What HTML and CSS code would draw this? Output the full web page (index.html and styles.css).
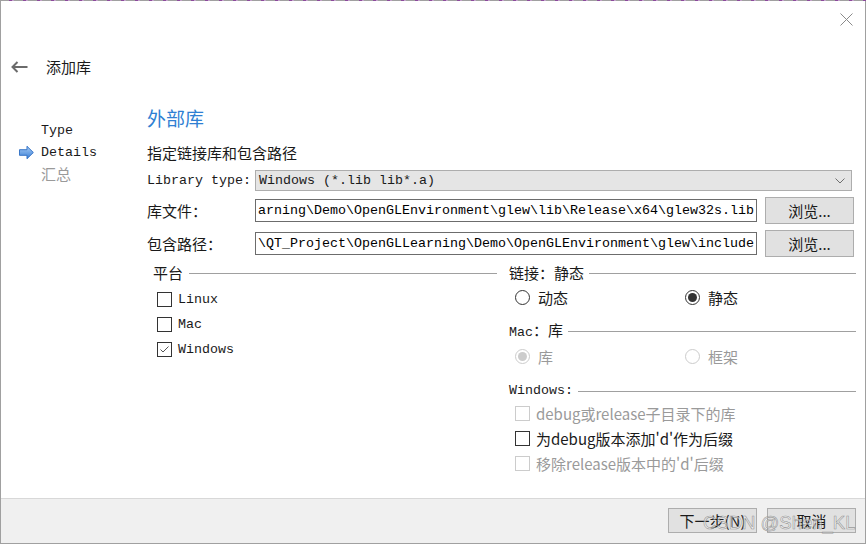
FILE: index.html
```html
<!DOCTYPE html>
<html lang="zh-CN">
<head>
<meta charset="utf-8">
<title>添加库</title>
<link rel="stylesheet" href="styles.css">
</head>
<body>
<div class="window">
  <div class="topline"></div>
  <div class="titlebar">
    <svg class="close" width="13" height="13" viewBox="0 0 13 13"><path d="M0.5 0.5 L12.5 12.5 M12.5 0.5 L0.5 12.5" stroke="#8a8a8a" stroke-width="1" fill="none"/></svg>
  </div>
  <div class="header">
    <svg class="back" width="17" height="12" viewBox="0 0 17 12"><path d="M1.5 6 H16.5 M6.5 1 L1.5 6 L6.5 11" stroke="#6b6b6b" stroke-width="2" fill="none"/></svg>
    <span class="header-title">添加库</span>
  </div>
  <div class="body">
    <nav class="nav">
      <div class="nav-item"><span class="nav-mark"></span><span class="mono">Type</span></div>
      <div class="nav-item"><svg class="nav-mark" width="16" height="15" viewBox="0 0 16 15"><defs><linearGradient id="ag" x1="0" y1="0" x2="0" y2="1"><stop offset="0" stop-color="#a9cdf5"/><stop offset="1" stop-color="#3a7fd6"/></linearGradient></defs><path d="M0.5 4.5 H8.5 V0.8 L15.3 7.5 L8.5 14.2 V10.5 H0.5 Z" fill="url(#ag)" stroke="#2f6fc4" stroke-width="1"/></svg><span class="mono">Details</span></div>
      <div class="nav-item pending"><span class="nav-mark"></span><span>汇总</span></div>
    </nav>
    <main class="main">
      <h1 class="title">外部库</h1>
      <p class="subtitle">指定链接库和包含路径</p>
      <div class="form">
        <span class="form-label mono">Library type:</span>
        <div class="combo"><span class="mono">Windows (*.lib lib*.a)</span><svg class="chev" width="10" height="6" viewBox="0 0 10 6"><path d="M0.5 0.5 L5 5 L9.5 0.5" stroke="#6f6f6f" fill="none" stroke-width="1"/></svg></div>
        <span class="form-label">库文件：</span>
        <div class="field mono">arning\Demo\OpenGLEnvironment\glew\lib\Release\x64\glew32s.lib</div>
        <button class="btn browse">浏览...</button>
        <span class="form-label">包含路径：</span>
        <div class="field mono">\QT_Project\OpenGLLearning\Demo\OpenGLEnvironment\glew\include</div>
        <button class="btn browse">浏览...</button>
      </div>
      <div class="groups">
        <section class="group group-left">
          <div class="group-head"><span>平台</span><span class="rule"></span></div>
          <div class="check-row first"><span class="box"></span><span class="mono">Linux</span></div>
          <div class="check-row"><span class="box"></span><span class="mono">Mac</span></div>
          <div class="check-row"><span class="box"><svg width="13" height="13" viewBox="0 0 13 13"><path d="M2.5 6.5 L5 9 L10.5 3.5" stroke="#555" stroke-width="1" fill="none"/></svg></span><span class="mono">Windows</span></div>
        </section>
        <section class="group group-right">
          <div class="group-head"><span>链接：静态</span><span class="rule"></span></div>
          <div class="radio-row first">
            <div class="radio-item"><span class="radio"></span><span>动态</span></div>
            <div class="radio-item"><span class="radio on"></span><span>静态</span></div>
          </div>
          <div class="group-head sub mac-head"><span><span class="mono">Mac</span>：库</span><span class="rule"></span></div>
          <div class="radio-row second disabled">
            <div class="radio-item"><span class="radio on"></span><span>库</span></div>
            <div class="radio-item"><span class="radio"></span><span>框架</span></div>
          </div>
          <div class="group-head sub win-head"><span class="mono">Windows:</span><span class="rule"></span></div>
          <div class="check-row first disabled"><span class="box"></span><span>debug或release子目录下的库</span></div>
          <div class="check-row"><span class="box"></span><span>为debug版本添加'd'作为后缀</span></div>
          <div class="check-row disabled"><span class="box"></span><span>移除release版本中的'd'后缀</span></div>
        </section>
      </div>
    </main>
  </div>
  <footer class="footer">
    <button class="btn foot">下一步(N)</button>
    <button class="btn foot">取消</button>
  </footer>
  <div class="watermark">CSDN @Shen_KL</div>
</div>
</body>
</html>
```
FILE: styles.css
```css
html, body {
  margin: 0;
  padding: 0;
  background: #fff;
}
body {
  font-family: "Noto Sans CJK SC", "Noto Sans", sans-serif;
  font-size: 15px;
  color: #1a1a1a;
}
.mono {
  font-family: "Liberation Mono", "Noto Sans CJK SC", monospace;
  font-size: 13.33px;
}
.window {
  position: relative;
  width: 866px;
  height: 544px;
  box-sizing: border-box;
  border: 1px solid #a0a0a0;
  border-top: 0;
  display: flex;
  flex-direction: column;
  background: #fff;
}
.topline {
  height: 1px;
  margin: 0 -1px;
  background: repeating-linear-gradient(90deg, #a0a0a0 0 9px, #8c4a9c 9px 12px, #c0a0c8 12px 14px);
}
.titlebar {
  height: 40px;
  display: flex;
  justify-content: flex-end;
  align-items: flex-start;
  padding: 12px 12px 0 0;
  box-sizing: border-box;
}
.header {
  height: 52px;
  display: flex;
  align-items: center;
  padding-left: 10px;
  gap: 18px;
}
.back { display: block; }
.header-title { line-height: 20px; }
.body {
  flex: 1;
  display: flex;
}
.nav {
  width: 146px;
  padding: 27px 0 0 18px;
  box-sizing: border-box;
}
.nav-item {
  height: 21.5px;
  display: flex;
  align-items: center;
  gap: 7px;
}
.nav-mark {
  width: 15px;
  height: 15px;
  display: block;
  flex: none;
}
.nav-item.pending { color: #9a9a9a; }
.main {
  width: 709px;
  padding-top: 13px;
}
.title {
  margin: 0;
  font-weight: normal;
  font-size: 19px;
  line-height: 24px;
  color: #2f7fd3;
}
.subtitle {
  margin: 13px 0 0;
  line-height: 20px;
}
.form {
  margin-top: 7px;
  display: grid;
  grid-template-columns: 108px 502px 97px;
  grid-template-rows: 21px 27px 27px;
  row-gap: 6px;
  align-items: center;
}
.form-label {
  line-height: 17px;
}
.combo {
  grid-column: 2 / 4;
  margin-right: 2px;
  height: 21px;
  box-sizing: border-box;
  border: 1px solid #adadad;
  background: #e5e5e5;
  display: flex;
  align-items: center;
  justify-content: space-between;
  padding: 0 6px 0 3px;
}
.chev { display: block; }
.field {
  height: 23px;
  box-sizing: border-box;
  border: 1px solid #6c6c6c;
  line-height: 21px;
  padding-left: 2px;
  white-space: nowrap;
  overflow: hidden;
  color: #000;
}
.btn {
  font-family: "Noto Sans CJK SC", sans-serif;
  font-size: 15px;
  color: #1a1a1a;
  background: #e1e1e1;
  border: 1px solid #adadad;
  padding: 0;
  margin: 0;
  line-height: 20px;
}
.browse {
  margin-left: 8px;
  width: 89px;
  height: 27px;
}
.groups {
  margin-top: 7px;
  display: grid;
  grid-template-columns: 350px 1fr;
  column-gap: 12px;
}
.group-head {
  height: 18px;
  display: flex;
  align-items: center;
  gap: 5px;
  line-height: 18px;
}
.group-left .group-head { padding-left: 6px; gap: 6px; }
.rule {
  flex: 1;
  height: 1px;
  background: #a0a0a0;
}
.check-row {
  height: 25px;
  display: flex;
  align-items: center;
  gap: 6px;
}
.group-left .check-row { padding-left: 10px; }
.group-right .check-row { padding-left: 6px; }
.check-row.first { margin-top: 4.5px; }
.group-right .check-row.first { margin-top: 1px; }
.box {
  width: 15px;
  height: 15px;
  box-sizing: border-box;
  border: 1px solid #333;
  background: #fff;
  flex: none;
  display: block;
}
.box svg { display: block; }
.disabled { color: #9a9a9a; }
.disabled .box { border-color: #cccccc; }
.group-head.mac-head { margin-top: 12.5px; }
.group-head.win-head { margin-top: 13.5px; }
.radio-row {
  height: 25px;
  display: grid;
  grid-template-columns: 170px 1fr;
  padding-left: 6px;
}
.radio-row.first { margin-top: 3px; }
.radio-row.second { margin-top: 3px; }
.radio-item {
  display: flex;
  align-items: center;
  gap: 8px;
}
.radio {
  width: 15px;
  height: 15px;
  box-sizing: border-box;
  border: 1px solid #333;
  border-radius: 50%;
  background: #fff;
  flex: none;
  display: flex;
  align-items: center;
  justify-content: center;
}
.radio.on::after {
  content: "";
  width: 9px;
  height: 9px;
  border-radius: 50%;
  background: #333;
}
.disabled .radio { border-color: #cccccc; }
.disabled .radio.on::after { background: #cccccc; }
.footer {
  height: 45px;
  box-sizing: border-box;
  border-top: 1px solid #d8d8d8;
  background: #f0f0f0;
  display: flex;
  justify-content: flex-end;
  align-items: flex-start;
  gap: 10px;
  padding: 9px 9px 0 0;
}
.foot {
  width: 89px;
  height: 25px;
}
.watermark {
  position: absolute;
  left: 702px;
  top: 512px;
  font-family: "Liberation Sans", sans-serif;
  font-size: 18.5px;
  color: rgba(255, 255, 255, 0.55);
  -webkit-text-stroke: 0.6px rgba(120, 120, 120, 0.75);
  white-space: nowrap;
  pointer-events: none;
}
```
